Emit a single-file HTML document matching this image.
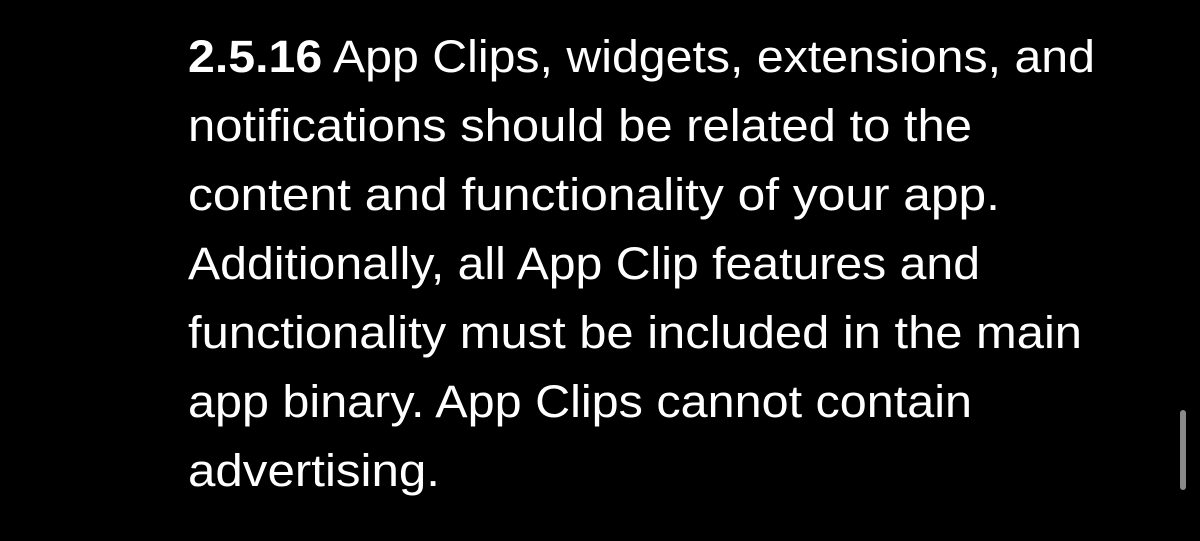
<!DOCTYPE html>
<html><head><style>
html,body{margin:0;padding:0;background:#000;width:1200px;height:541px;overflow:hidden}
svg{display:block}
text{font-family:"Liberation Sans",sans-serif;font-size:45px;fill:#fff}
</style></head><body>
<svg width="1200" height="541" viewBox="0 0 1200 541">
<rect width="1200" height="541" fill="#000"/>
<text x="188" y="72" textLength="907" lengthAdjust="spacingAndGlyphs"><tspan font-weight="bold">2.5.16</tspan> App Clips, widgets, extensions, and</text>
<text x="188" y="141" textLength="784" lengthAdjust="spacingAndGlyphs">notifications should be related to the</text>
<text x="188" y="210" textLength="812" lengthAdjust="spacingAndGlyphs">content and functionality of your app.</text>
<text x="188" y="279" textLength="792" lengthAdjust="spacingAndGlyphs">Additionally, all App Clip features and</text>
<text x="188" y="348" textLength="894" lengthAdjust="spacingAndGlyphs">functionality must be included in the main</text>
<text x="188" y="417" textLength="784" lengthAdjust="spacingAndGlyphs">app binary. App Clips cannot contain</text>
<text x="188" y="486" textLength="252" lengthAdjust="spacingAndGlyphs">advertising.</text>
<rect x="1180" y="410" width="6" height="80" rx="3" fill="#8a8a8a"/>
</svg>
</body></html>
